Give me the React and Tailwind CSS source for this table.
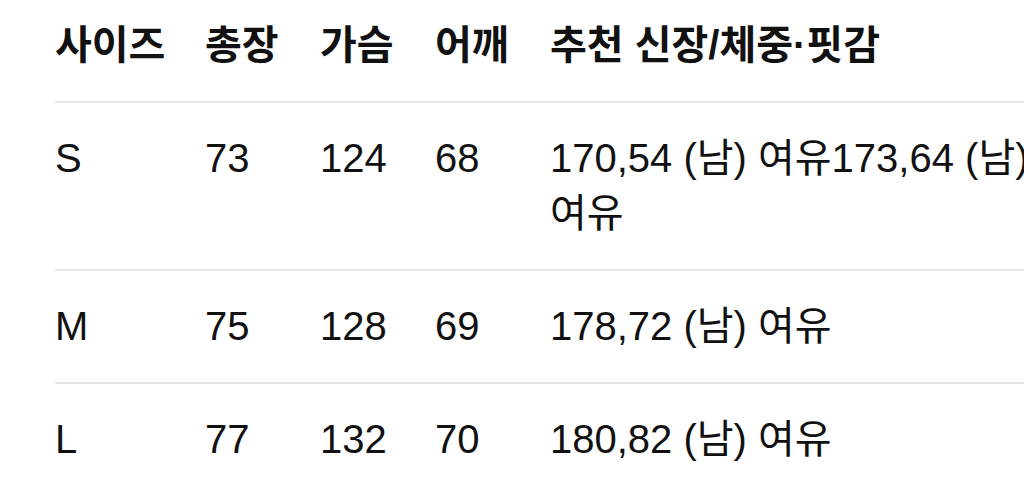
export default function App() {
  const rows = [
    ["S", "73", "124", "68", "170,54 (남) 여유173,64 (남) 여유"],
    ["M", "75", "128", "69", "178,72 (남) 여유"],
    ["L", "77", "132", "70", "180,82 (남) 여유"],
  ];
  const font = { fontFamily: '"Liberation Sans", "Noto Sans CJK KR", sans-serif' };
  return (
    <div className="w-[1024px] h-[491px] overflow-hidden bg-white pl-[55px]" style={font}>
      <table className="border-collapse text-[40px] leading-[55px] text-[#111111] w-[1000px] table-fixed">
        <colgroup>
          <col className="w-[150px]" />
          <col className="w-[115px]" />
          <col className="w-[115px]" />
          <col className="w-[115px]" />
          <col className="w-[505px]" />
        </colgroup>
        <thead>
          <tr className="border-b-2 border-[#e6e6e6]">
            {["사이즈", "총장", "가슴", "어깨", "추천 신장/체중·핏감"].map((h) => (
              <th key={h} className="text-left font-semibold pt-[18px] pb-[28px] align-top whitespace-nowrap">
                {h}
              </th>
            ))}
          </tr>
        </thead>
        <tbody>
          {rows.map((r) => (
            <tr key={r[0]} className="border-b-2 border-[#e6e6e6]">
              {r.map((c, i) => (
                <td key={i} className={i === 4 ? "py-[28px] pr-[20px] align-top" : "py-[28px] align-top"}>
                  {c}
                </td>
              ))}
            </tr>
          ))}
        </tbody>
      </table>
    </div>
  );
}
